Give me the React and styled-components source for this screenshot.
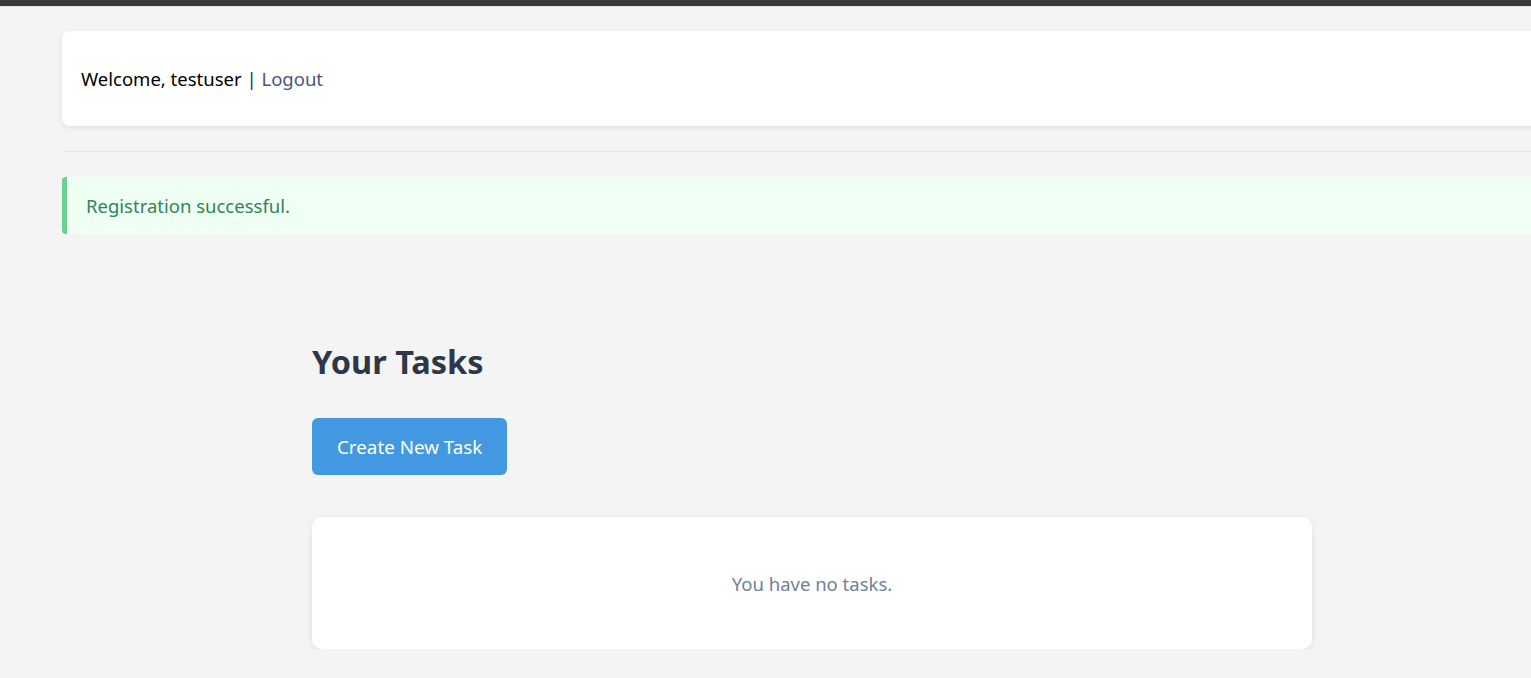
import React from "react";
import styled, { createGlobalStyle } from "styled-components";

const Global = createGlobalStyle`
  html, body { margin: 0; padding: 0; overflow-x: hidden; }
  body {
    background: #f4f4f4;
    font-family: "Noto Sans", "Open Sans", sans-serif;
    color: #000;
  }
`;

const TopBar = styled.div`
  height: 6px;
  background: #3a3a3a;
  border-bottom: 1px solid #e4e4e4;
`;

const Container = styled.div`
  width: 1500px;
  margin-left: 62px;
  padding-top: 24px;
`;

const Header = styled.header`
  background: #fff;
  border-radius: 8px;
  box-shadow: 0 2px 6px rgba(0, 0, 0, 0.08);
  height: 95px;
  display: flex;
  align-items: center;
  padding: 0 19px;
  box-sizing: border-box;
  font-size: 18.5px;
  white-space: pre;
`;

const Pipe = styled.span`
  color: #1a2f5a;
`;

const Link = styled.a`
  color: #4a5580;
  text-decoration: none;
`;

const Divider = styled.hr`
  border: none;
  border-top: 1px solid #e3e3ea;
  margin: 25px 0 25px;
`;

const Alert = styled.div`
  background: #f0fff4;
  border-left: 5px solid #68d391;
  border-radius: 4px 0 0 4px;
  color: #2f855a;
  height: 57px;
  display: flex;
  align-items: center;
  padding-left: 19px;
  box-sizing: border-box;
  font-size: 18.5px;
`;

const Main = styled.main`
  width: 1000px;
  margin: 0 auto;
  padding-top: 104px;
`;

const Title = styled.h1`
  margin: 0;
  font-size: 32.5px;
  font-weight: 700;
  color: #2d3748;
  line-height: 48px;
`;

const Button = styled.button`
  margin-top: 32px;
  background: #4299e1;
  color: #fff;
  border: none;
  border-radius: 6px;
  height: 57px;
  padding: 0 25px;
  font-family: inherit;
  font-size: 18.8px;
  cursor: pointer;
`;

const Card = styled.div`
  margin-top: 42px;
  background: #fff;
  border-radius: 10px;
  box-shadow: 0 2px 6px rgba(0, 0, 0, 0.09);
  height: 132px;
  display: flex;
  align-items: center;
  justify-content: center;
  color: #718096;
  font-size: 18.5px;
`;

export default function App() {
  return (
    <>
      <Global />
      <TopBar />
      <Container>
        <Header>
          <span>Welcome, testuser </span>
          <Pipe>|</Pipe>
          <span> </span>
          <Link href="#">Logout</Link>
        </Header>
        <Divider />
        <Alert>Registration successful.</Alert>
        <Main>
          <Title>Your Tasks</Title>
          <Button>Create New Task</Button>
          <Card>You have no tasks.</Card>
        </Main>
      </Container>
    </>
  );
}
